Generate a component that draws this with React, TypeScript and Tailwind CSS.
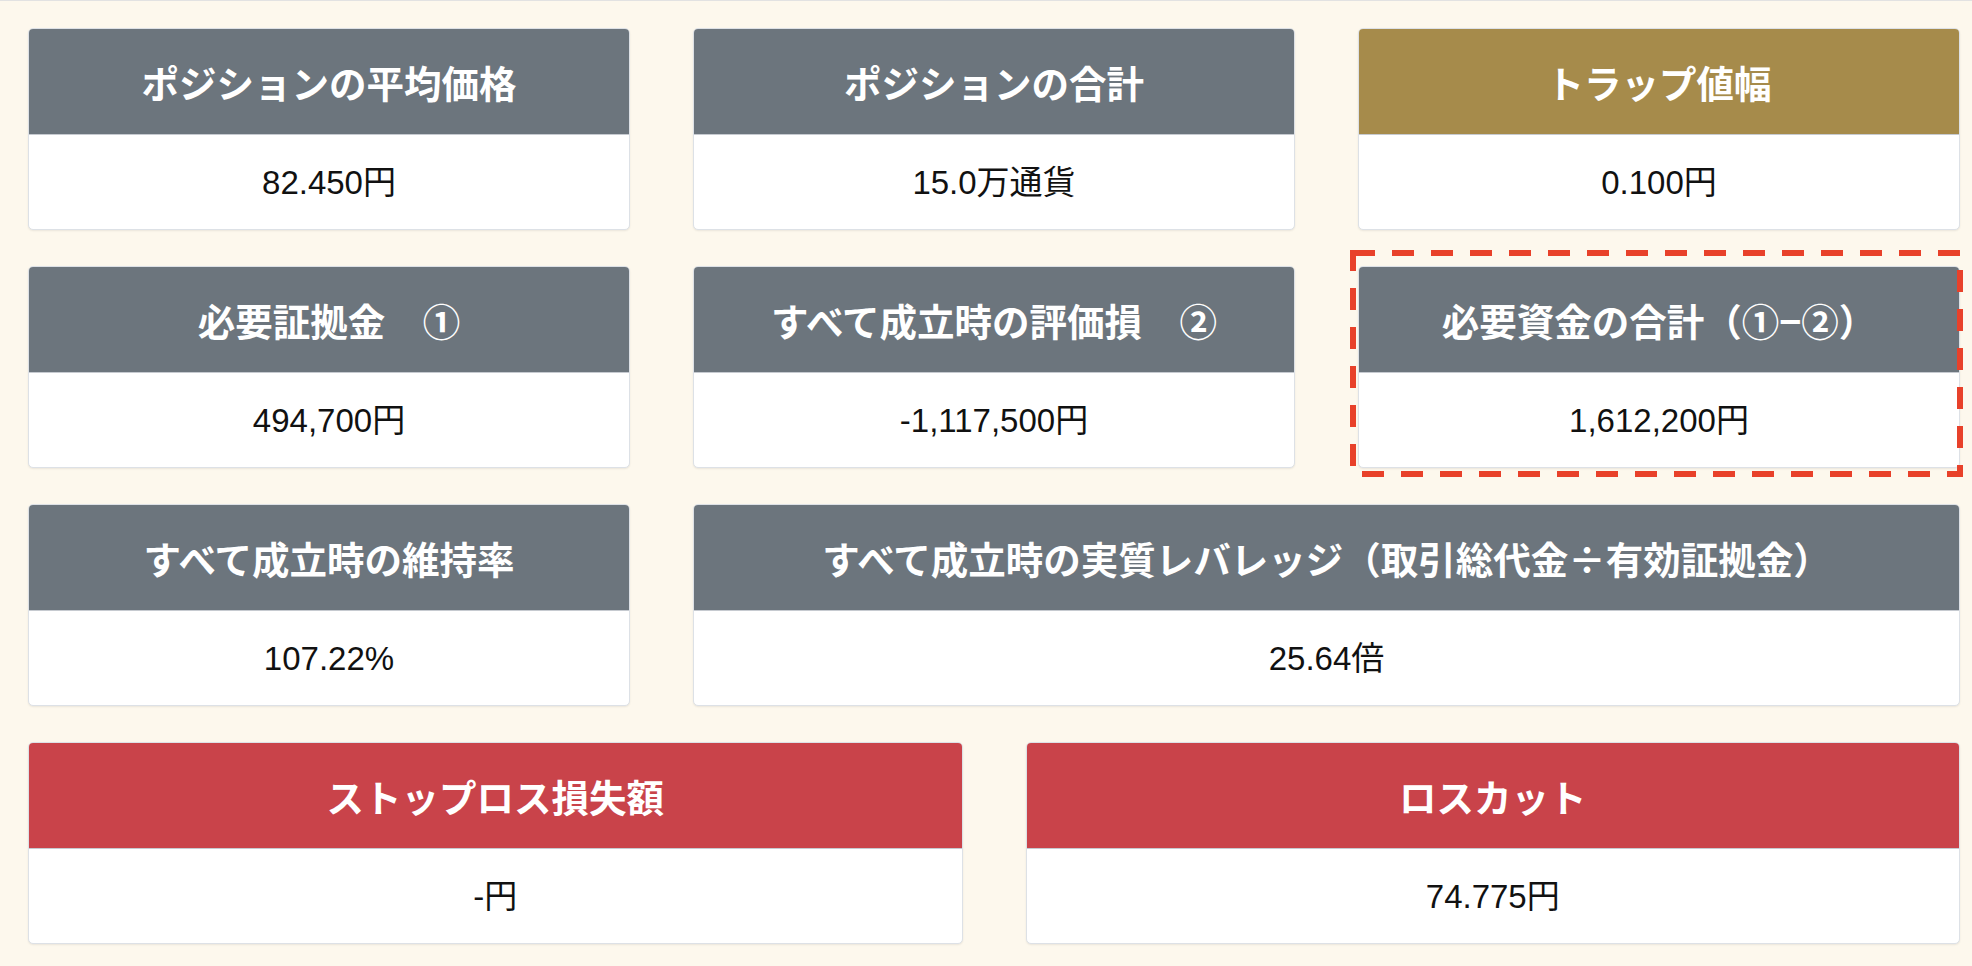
import React from 'react'

type Tone = 'gray' | 'gold' | 'red'

const headerTone: Record<Tone, string> = {
  gray: 'bg-[#6c757d]',
  gold: 'bg-[#a68b4b]',
  red: 'bg-[#c9434a]',
}

interface StatCardProps {
  title: string
  value: string
  tone?: Tone
  className?: string
}

function StatCard({ title, value, tone = 'gray', className = '' }: StatCardProps) {
  return (
    <div
      className={`flex flex-col rounded-[5px] border border-[#dde1e6] bg-white overflow-hidden shadow-[0_1px_2px_rgba(0,0,0,0.08)] ${className}`}
    >
      <div
        className={`h-[106px] flex items-center justify-center border-b border-[#c6cad0] ${headerTone[tone]}`}
      >
        <span className="text-white font-bold text-[37.5px] leading-none whitespace-pre [font-family:'Noto_Sans_CJK_JP',sans-serif]">
          {title}
        </span>
      </div>
      <div className="h-[94px] flex items-center justify-center">
        <span className="text-[#111] text-[33px] leading-none [font-family:'Liberation_Sans','Noto_Sans_CJK_JP',sans-serif]">
          {value}
        </span>
      </div>
    </div>
  )
}

export default function App() {
  return (
    <div className="min-h-[966px] bg-[#fdf8ed] border-t border-[#e2e2e2] pt-[27px] pl-[28px] pr-[12px]">
      {/* top rows: three columns */}
      <div className="grid grid-cols-3 gap-x-[63px] gap-y-[36px]">
        <StatCard title="ポジションの平均価格" value="82.450円" />
        <StatCard title="ポジションの合計" value="15.0万通貨" />
        <StatCard title="トラップ値幅" value="0.100円" tone="gold" />

        <StatCard title="必要証拠金　①" value="494,700円" />
        <StatCard title="すべて成立時の評価損　②" value="-1,117,500円" />
        <div className="relative">
          <StatCard title="必要資金の合計（①−②）" value="1,612,200円" />
          {/* highlight frame */}
          <svg className="absolute left-[-8px] top-[-16px] w-[613px] h-[227px] pointer-events-none" viewBox="0 0 613 227">
            <rect
              x="3"
              y="3"
              width="607"
              height="221"
              fill="none"
              stroke="#e8412a"
              strokeWidth="6"
              strokeDasharray="22 17"
            />
          </svg>
        </div>

        <StatCard title="すべて成立時の維持率" value="107.22%" />
        <StatCard title="すべて成立時の実質レバレッジ（取引総代金÷有効証拠金）" value="25.64倍" className="col-span-2" />
      </div>

      {/* bottom row: two columns */}
      <div className="grid grid-cols-2 gap-x-[63px] mt-[36px]">
        <StatCard title="ストップロス損失額" value="-円" tone="red" />
        <StatCard title="ロスカット" value="74.775円" tone="red" />
      </div>
    </div>
  )
}
